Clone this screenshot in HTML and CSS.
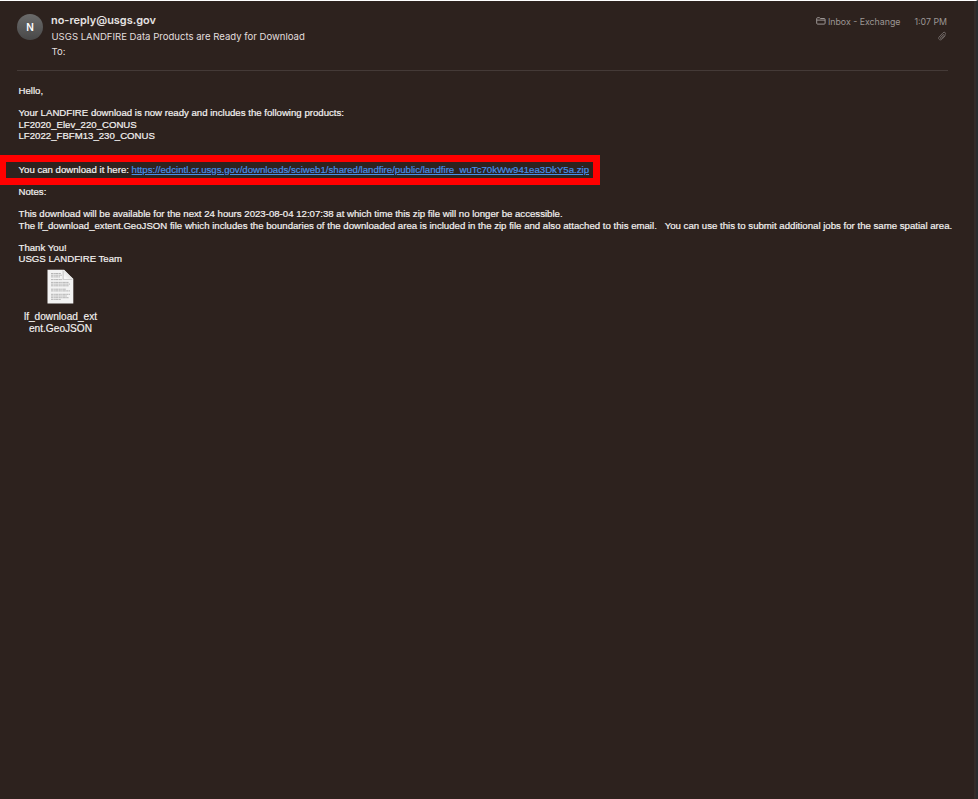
FILE: index.html
```html
<!DOCTYPE html>
<html lang="en">
<head>
<meta charset="utf-8">
<title>USGS LANDFIRE Data Products are Ready for Download</title>
<link rel="stylesheet" href="styles.css">
</head>
<body>
<main class="window">
  <header class="header">
    <div class="avatar">N</div>
    <div class="envelope">
      <div class="sender">no-reply@usgs.gov</div>
      <div class="subject">USGS LANDFIRE Data Products are Ready for Download</div>
      <div class="to">To:</div>
    </div>
    <div class="meta">
      <div class="meta-row">
        <svg class="folder" viewBox="0 0 10 8" fill="none" stroke="currentColor"><path d="M.7 6.2V1.6Q.7.7 1.6.7H3.4L4.3 1.5H8.2Q9.1 1.5 9.1 2.4V6.2Q9.1 7.1 8.2 7.1H1.6Q.7 7.1.7 6.2ZM.7 3.1H9.1"/></svg>
        <span class="mailbox">Inbox - Exchange</span>
        <time class="time">1:07 PM</time>
      </div>
      <svg class="clip" viewBox="0 0 10 10" fill="none" stroke="currentColor"><path d="M8.4 4.5 5 8.2C3.4 9.9.6 8.2 2 6.1L6 1.8C7.2.4 9.4 1.7 8.2 3.4L4.5 7.3C3.7 8 2.9 7.2 3.6 6.4L6.8 3"/></svg>
    </div>
  </header>
  <article class="message">
    <p>Hello,</p>
    <p>Your LANDFIRE download is now ready and includes the following products:<br>LF2020_Elev_220_CONUS<br>LF2022_FBFM13_230_CONUS</p>
    <p class="download">You can download it here: <a class="link" href="#">https://edcintl.cr.usgs.gov/downloads/sciweb1/shared/landfire/public/landfire_wuTc70kWw941ea3DkY5a.zip</a></p>
    <p>Notes:</p>
    <p>This download will be available for the next 24 hours 2023-08-04 12:07:38 at which time this zip file will no longer be accessible.<br>The lf_download_extent.GeoJSON file which includes the boundaries of the downloaded area is included in the zip file and also attached to this email. &nbsp; You can use this to submit additional jobs for the same spatial area.</p>
    <p>Thank You!<br>USGS LANDFIRE Team</p>
  </article>
  <figure class="attachment">
    <svg class="document" viewBox="0 0 27 36">
      <defs><linearGradient id="fold" x1="0" y1="1" x2="1" y2="0"><stop offset="0" stop-color="#fff"/><stop offset="1" stop-color="#c9c9c9"/></linearGradient></defs>
      <path d="M.5.8H17L26.3 10V34.6H.5Z" fill="#f3f3f3"/>
      <path d="M15.5 1V11H26Z" fill="#cfcfcf"/>
      <path d="M17 .8 26.3 10H17.6Q16.8 10 16.8 9.2Z" fill="url(#fold)"/>
      <g stroke="#a5a5a5" stroke-width=".8" stroke-dasharray="2.2 .4 1.3 .3 3 .4"><path d="M4 4.5H14M4 6.2H15M4 7.9H13M4 10.6H15M4 13.4H22M4 15.1H23M4 16.8H22M4 20.2H19M4 21.9H23M4 25.3H23M4 27H20M4 28.7H22M4 30.4H14"/></g>
    </svg>
    <figcaption class="filename">lf_download_ext<br>ent.GeoJSON</figcaption>
  </figure>
</main>
</body>
</html>
```
FILE: styles.css
```css
*, *::after { box-sizing: border-box; }
body {
  margin: 0;
  background: #2d221e;
  color: #f4f2f1;
  font-family: "Liberation Sans", Arial, sans-serif;
}
.window {
  height: 799px;
  overflow: hidden;
  border-top: 1px solid #fff;
  border-right: 2px solid #282b2c;
  box-shadow: inset -2px 0 #342b29;
}
.header {
  display: flex;
  height: 70px;
  margin: 0 28px 0 17px;
  padding-top: 13px;
  border-bottom: 1px solid #443a37;
  font-family: Inter, sans-serif;
}
.avatar {
  width: 26px;
  height: 26px;
  border-radius: 50%;
  background: linear-gradient(#6b6b6b, #484848);
  color: #fff;
  font-size: 10px;
  font-weight: 600;
  line-height: 27px;
  text-align: center;
}
.envelope {
  flex: 1;
  margin: -1px 0 0 8px;
  white-space: nowrap;
}
.sender {
  font-size: 10.95px;
  font-weight: 600;
  line-height: 15px;
  color: #e6e3e2;
}
.subject, .to {
  padding-left: .5px;
  font-size: 9.57px;
  line-height: 17px;
  color: #e2dfde;
}
.to { line-height: 14px; }
.meta {
  display: flex;
  flex-direction: column;
  align-items: flex-end;
  color: #9c9694;
  font-size: 8.8px;
}
.meta-row {
  display: flex;
  align-items: center;
  height: 14px;
  margin-right: 1px;
  white-space: nowrap;
}
.folder { width: 10px; height: 8px; }
.mailbox { margin-left: 2px; }
.time { margin-left: 14px; }
.clip {
  width: 10px;
  height: 10px;
  margin: 3px 1px 0 0;
  color: #6f6765;
}
.message {
  padding: 14px 0 0 18.5px;
  font-size: 9.637px;
  line-height: 11.22px;
  white-space: nowrap;
  -webkit-text-stroke: .2px;
}
.message p { margin: 0 0 11.22px; }
.message .download {
  position: relative;
  margin-top: 22.44px;
}
.download::after {
  content: "";
  position: absolute;
  left: -18.5px;
  top: -8.5px;
  width: 600px;
  height: 30px;
  border: 7px solid #f00;
  border-left-width: 6px;
  pointer-events: none;
}
.link { color: #4690e8; }
.attachment {
  display: flex;
  flex-direction: column;
  align-items: center;
  width: 86px;
  margin: -7px 0 0 17.5px;
}
.document { width: 27px; height: 36px; }
.filename {
  margin-top: 6px;
  font-size: 10.15px;
  line-height: 12px;
  text-align: center;
  -webkit-text-stroke: .15px;
}
```
